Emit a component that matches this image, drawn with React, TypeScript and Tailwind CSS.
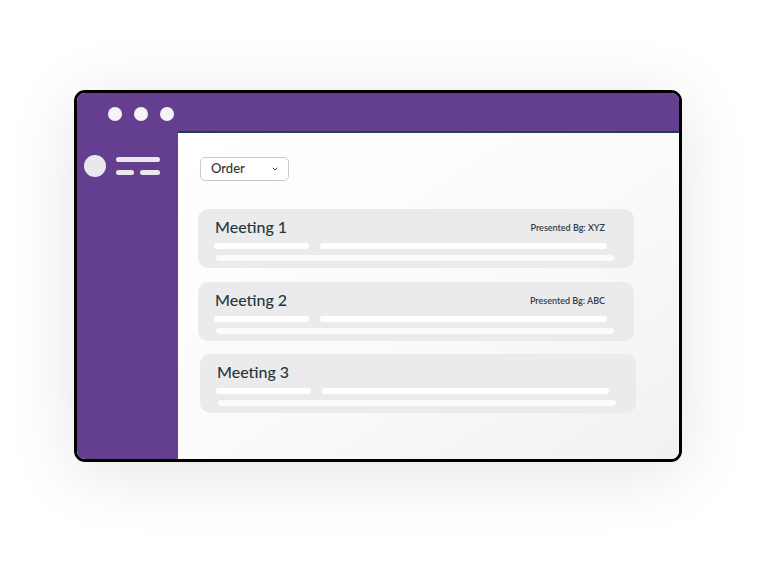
const cards = [
  { title: 'Meeting 1', by: 'Presented Bg: XYZ', shift: '' },
  { title: 'Meeting 2', by: 'Presented Bg: ABC', shift: '' },
  { title: 'Meeting 3', by: '', shift: 'ml-[2px] -mt-[1px]' },
];

function Card({ title, by, shift }: { title: string; by: string; shift: string }) {
  return (
    <div className={`w-[436px] h-[59px] rounded-[10px] bg-[#ebebed] pt-[7px] pl-[16px] ${shift}`}>
      <div className="flex h-[22px] items-center justify-between pr-[29px]">
        <span className="pl-[1px] text-[16px] font-medium leading-[22px] text-[#26373e]">{title}</span>
        {by && <span className="mt-[2px] text-[9px] font-semibold text-[#2d3e45]">{by}</span>}
      </div>
      <div className="mt-[5px] flex gap-[11px]">
        <div className="h-[6px] w-[95px] rounded-full bg-white" />
        <div className="h-[6px] w-[287px] rounded-full bg-white" />
      </div>
      <div className="ml-[2px] mt-[6px] h-[6px] w-[398px] rounded-full bg-[#fbfbfb]" />
    </div>
  );
}

export default function App() {
  return (
    <div className="h-[570px] w-[778px] bg-white pl-[74px] pt-[90px] font-['Lato','Liberation_Sans',sans-serif]">
      <div className="flex h-[372px] w-[608px] flex-col overflow-hidden rounded-[11px] border-[3px] border-black shadow-[0_10px_70px_rgba(0,0,0,0.11)]">
        <div className="flex h-[38px] shrink-0 gap-[12px] bg-[#643f90] pl-[31px] pt-[14px]">
          <span className="h-[14px] w-[14px] rounded-full bg-[#f4f3f6]" />
          <span className="h-[14px] w-[14px] rounded-full bg-[#f4f3f6]" />
          <span className="h-[14px] w-[14px] rounded-full bg-[#f4f3f6]" />
        </div>
        <div className="flex flex-1">
          <div className="w-[101px] shrink-0 bg-[#643f90] pl-[7px] pt-[24px]">
            <div className="flex items-center gap-[10px]">
              <span className="h-[22px] w-[22px] rounded-full bg-[#e9e8ec]" />
              <div className="flex flex-col gap-[8px]">
                <span className="h-[5px] w-[44px] rounded-full bg-[#e9e8ec]" />
                <div className="flex gap-[6px]">
                  <span className="h-[5px] w-[18px] rounded-full bg-[#e9e8ec]" />
                  <span className="h-[5px] w-[20px] rounded-full bg-[#e9e8ec]" />
                </div>
              </div>
            </div>
          </div>
          <div className="flex-1 border-t-2 border-[#25404a] bg-gradient-to-br from-white via-[#fbfbfb] to-[#f1f1f1] pl-[20px] pt-[24px]">
            <div className="ml-[2px] flex h-[24px] w-[89px] items-center justify-between rounded-[5px] border border-[#c9c9c9] bg-white pl-[10px] pr-[10px]">
              <span className="text-[13px] font-medium text-[#333]">Order</span>
              <svg width="6" height="4" viewBox="0 0 6 4" fill="none">
                <path d="M0.8 0.8l2.2 2.2 2.2-2.2" stroke="#444" strokeWidth="1" />
              </svg>
            </div>
            <div className="mt-[28px] flex flex-col gap-[14px]">
              {cards.map((c) => (
                <Card key={c.title} {...c} />
              ))}
            </div>
          </div>
        </div>
      </div>
    </div>
  );
}
